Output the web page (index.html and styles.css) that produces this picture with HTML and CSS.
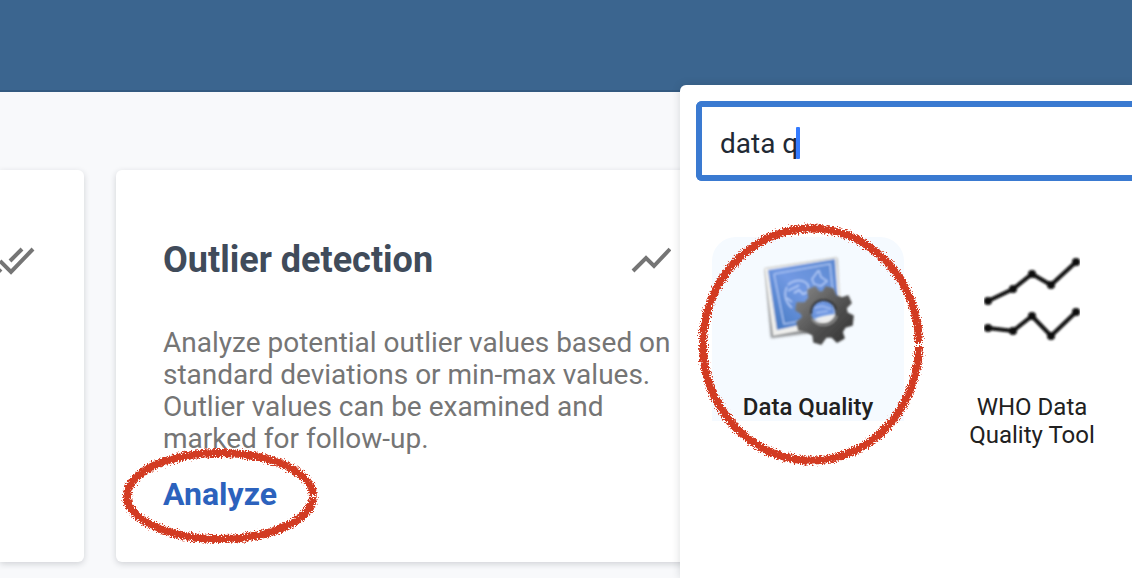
FILE: index.html
```html
<!DOCTYPE html>
<html lang="en">
<head>
<meta charset="utf-8">
<title>Data Quality</title>
<link rel="stylesheet" href="styles.css">
</head>
<body>
<header class="topbar"></header>
<main class="cards">
  <section class="card card-previous">
    <svg class="check-icon" viewBox="0 0 48 40" fill="none" stroke="#757575" stroke-width="4" aria-hidden="true">
      <path d="M4 22 14 32M13 21 24 32 46 9M23 21 35 9"/>
    </svg>
  </section>
  <section class="card card-outlier">
    <div class="card-head">
      <h2 class="card-title">Outlier detection</h2>
      <svg class="trend-icon" viewBox="0 0 40 28" fill="none" stroke="#757575" stroke-width="4" aria-hidden="true">
        <path d="M2 25 15 12 23 20 39 3"/>
      </svg>
    </div>
    <p class="card-text">Analyze potential outlier values based on standard deviations or min-max values. Outlier values can be examined and marked for follow-up.</p>
    <a class="card-link" href="#analyze">Analyze</a>
  </section>
</main>

<aside class="menu">
  <div class="search">
    <input class="search-input" type="text" value="data q" aria-label="Search apps">
    <span class="caret"></span>
  </div>
  <nav class="apps">
    <a class="app app-selected" href="#data-quality">
      <svg class="app-icon" viewBox="0 0 96 96" aria-hidden="true">
        <defs>
          <linearGradient id="blue" x1="0" y1="1" x2="1" y2="0">
            <stop offset="0" stop-color="#3f75bd"/><stop offset=".5" stop-color="#7299e3"/><stop offset="1" stop-color="#5b88d0"/>
          </linearGradient>
          <linearGradient id="steel" x1="0" y1="0" x2="1" y2="1">
            <stop offset="0" stop-color="#8a8a8a"/><stop offset=".5" stop-color="#555"/><stop offset="1" stop-color="#303030"/>
          </linearGradient>
          <filter id="soft" x="-20%" y="-20%" width="140%" height="140%"><feGaussianBlur stdDeviation=".8"/></filter>
          <filter id="shade" x="-30%" y="-30%" width="160%" height="160%"><feGaussianBlur stdDeviation="1.6"/></filter>
        </defs>
        <path d="M5 16 11 85 50 80 80 72 77 5Z" fill="#444" opacity=".6" filter="url(#shade)"/>
        <g filter="url(#soft)">
          <path d="M4 15 77 4 83 70 13 83Z" fill="#eeeeec"/>
          <path d="M8 17 75 6 79 63 17 77Z" fill="url(#blue)"/>
          <g fill="none" stroke="#b9cff8">
            <path d="M14 21 70 11 75 61M14 21 24 71 52 66" stroke-width="1.2"/>
            <path d="M27 34c-4 7-1 16 5 21M28 32c5-5 15-7 20 0l1 6M28 38c6-4 8-3 11-6M34 40l5-3 4 4 5-2M27 45l5 4" stroke-width="1.5"/>
            <path d="M58 18l-6 8 2 5 7 2 6-5-6-4-2-6Z" stroke-width="1.3"/>
            <path d="M54 55l8-2 9 3M56 60l12-2" stroke-width="1"/>
          </g>
        </g>
        <g filter="url(#soft)">
          <path fill-rule="evenodd" fill="url(#steel)" stroke="url(#steel)" stroke-width="1.6" stroke-linejoin="round" d="M48 37 55 34 59 39 63 39 66 34 73 36 76 43 82 45 88 43 91 50 86 55 87 60 93 63 92 72 85 74 82 79 84 85 77 89 72 84 66 84 61 91 54 89 53 82 48 79 39 77 37 69 43 64 41 60 36 57 37 50 45 50 49 45ZM63 47a13 12 0 1 0 0 24 13 12 0 1 0 0-24Z"/>
          <path d="M51 61c-1-17 22-19 25-4" fill="none" stroke="#2e2e2e" stroke-width="2"/>
          <path d="M54 66c7-3 13-4 21-5 0 4-5 8-11 8-5 0-8-1-10-3Z" fill="#eeeeee"/>
          <path d="M52 66c6 9 21 8 25-3" fill="none" stroke="#999" stroke-width="1.4"/>
        </g>
      </svg>
      <span class="app-name">Data Quality</span>
    </a>
    <a class="app" href="#who-data-quality-tool">
      <svg class="app-icon" viewBox="0 0 96 96" aria-hidden="true">
        <g filter="url(#soft)">
          <path fill="none" stroke="#080808" stroke-width="4" d="M0 48H4L29 36 48 21 67 32 92 9H96M0 75H4L29 78 48 63 67 83 92 59H96"/>
          <g fill="#080808">
            <circle cx="4" cy="48" r="4"/><circle cx="29" cy="36" r="4"/><circle cx="48" cy="21" r="4"/><circle cx="67" cy="32" r="4"/><circle cx="92" cy="9" r="4"/>
            <circle cx="4" cy="75" r="4"/><circle cx="29" cy="78" r="4"/><circle cx="48" cy="63" r="4"/><circle cx="67" cy="83" r="4"/><circle cx="92" cy="59" r="4"/>
          </g>
        </g>
      </svg>
      <span class="app-name">WHO Data Quality Tool</span>
    </a>
  </nav>
</aside>

<svg class="mark mark-app" viewBox="0 0 232 248" fill="none" aria-hidden="true">
  <defs>
    <filter id="rough" x="-5%" y="-5%" width="110%" height="110%">
      <feTurbulence type="fractalNoise" baseFrequency=".7" numOctaves="2" seed="4" result="n"/>
      <feDisplacementMap in="SourceGraphic" in2="n" scale="8" xChannelSelector="R" yChannelSelector="G"/>
    </filter>
  </defs>
  <path d="M225 122A108 116 0 1 0 225 125" stroke="#d23a20" stroke-width="8" filter="url(#rough)"/>
</svg>
<svg class="mark mark-link" viewBox="0 0 204 104" fill="none" aria-hidden="true">
  <path d="M196 51A93 43 0 1 0 196 53" stroke="#d23a20" stroke-width="8" filter="url(#rough)"/>
</svg>
</body>
</html>
```
FILE: styles.css
```css
* { box-sizing: border-box; }
body {
  margin: 0;
  min-height: 100vh;
  overflow: hidden;
  position: relative;
  background: #f8f9fb;
  font-family: Roboto, "Liberation Sans", sans-serif;
  color: #212121;
}
.topbar {
  height: 92px;
  background: #3b658f;
  border-bottom: 2px solid #345a80;
}
.cards {
  display: flex;
  gap: 32px;
  padding-top: 78px;
}
.card {
  background: #fff;
  border-radius: 6px;
  box-shadow: 0 2px 6px rgba(33, 41, 52, .18);
}
.card-previous {
  flex: 0 0 84px;
  border-radius: 0 6px 6px 0;
  padding-top: 70px;
  overflow: hidden;
}
.check-icon {
  display: block;
  width: 48px;
  height: 40px;
  margin-left: -13px;
}
.card-outlier {
  flex: 1;
  padding: 66px 47px 46px;
}
.card-head {
  display: flex;
  align-items: center;
  justify-content: space-between;
  max-width: 508px;
  margin-bottom: 43px;
}
.card-title {
  margin: 0;
  font-size: 36px;
  line-height: 48px;
  font-weight: 700;
  color: #404b5a;
}
.trend-icon {
  width: 40px;
  height: 28px;
}
.card-text {
  margin: 0 0 17px;
  max-width: 516px;
  font-size: 28px;
  line-height: 32px;
  color: #757575;
}
.card-link {
  display: inline-block;
  font-size: 32px;
  line-height: 44px;
  font-weight: 700;
  color: #2c62bd;
  text-decoration: none;
}
.menu {
  position: absolute;
  top: 85px;
  right: 0;
  bottom: 0;
  width: 452px;
  padding: 16px 0 0 16px;
  background: #fff;
  border-radius: 6px 0 0 0;
  box-shadow: 0 0 8px rgba(33, 41, 52, .16);
}
.search { position: relative; }
.search-input {
  display: block;
  width: 100%;
  height: 80px;
  padding: 4px 18px 0;
  border: 6px solid #3a7ad1;
  border-right: 0;
  border-radius: 6px 0 0 6px;
  outline: 0;
  background: #fff;
  font: 28px Roboto, "Liberation Sans", sans-serif;
  color: #212934;
}
.caret {
  position: absolute;
  left: 100px;
  top: 26px;
  width: 4px;
  height: 32px;
  border-radius: 1px;
  background: #347bff;
}
.apps {
  display: grid;
  grid-template-columns: 192px 192px;
  align-items: start;
  gap: 32px;
  padding: 56px 0 0 16px;
}
.app {
  display: flex;
  flex-direction: column;
  align-items: center;
  gap: 44px;
  padding: 16px 16px 0;
  border-radius: 24px 24px 0 0;
  color: #212121;
  text-decoration: none;
}
.app-selected {
  background: #f5faff;
  font-weight: 500;
}
.app-icon {
  width: 96px;
  height: 96px;
}
.app-name {
  font-size: 24px;
  line-height: 28px;
  text-align: center;
}
.mark {
  position: absolute;
  pointer-events: none;
}
.mark-app {
  left: 694px;
  top: 221px;
  width: 232px;
  height: 248px;
}
.mark-link {
  left: 117px;
  top: 444px;
  width: 204px;
  height: 104px;
}
```
